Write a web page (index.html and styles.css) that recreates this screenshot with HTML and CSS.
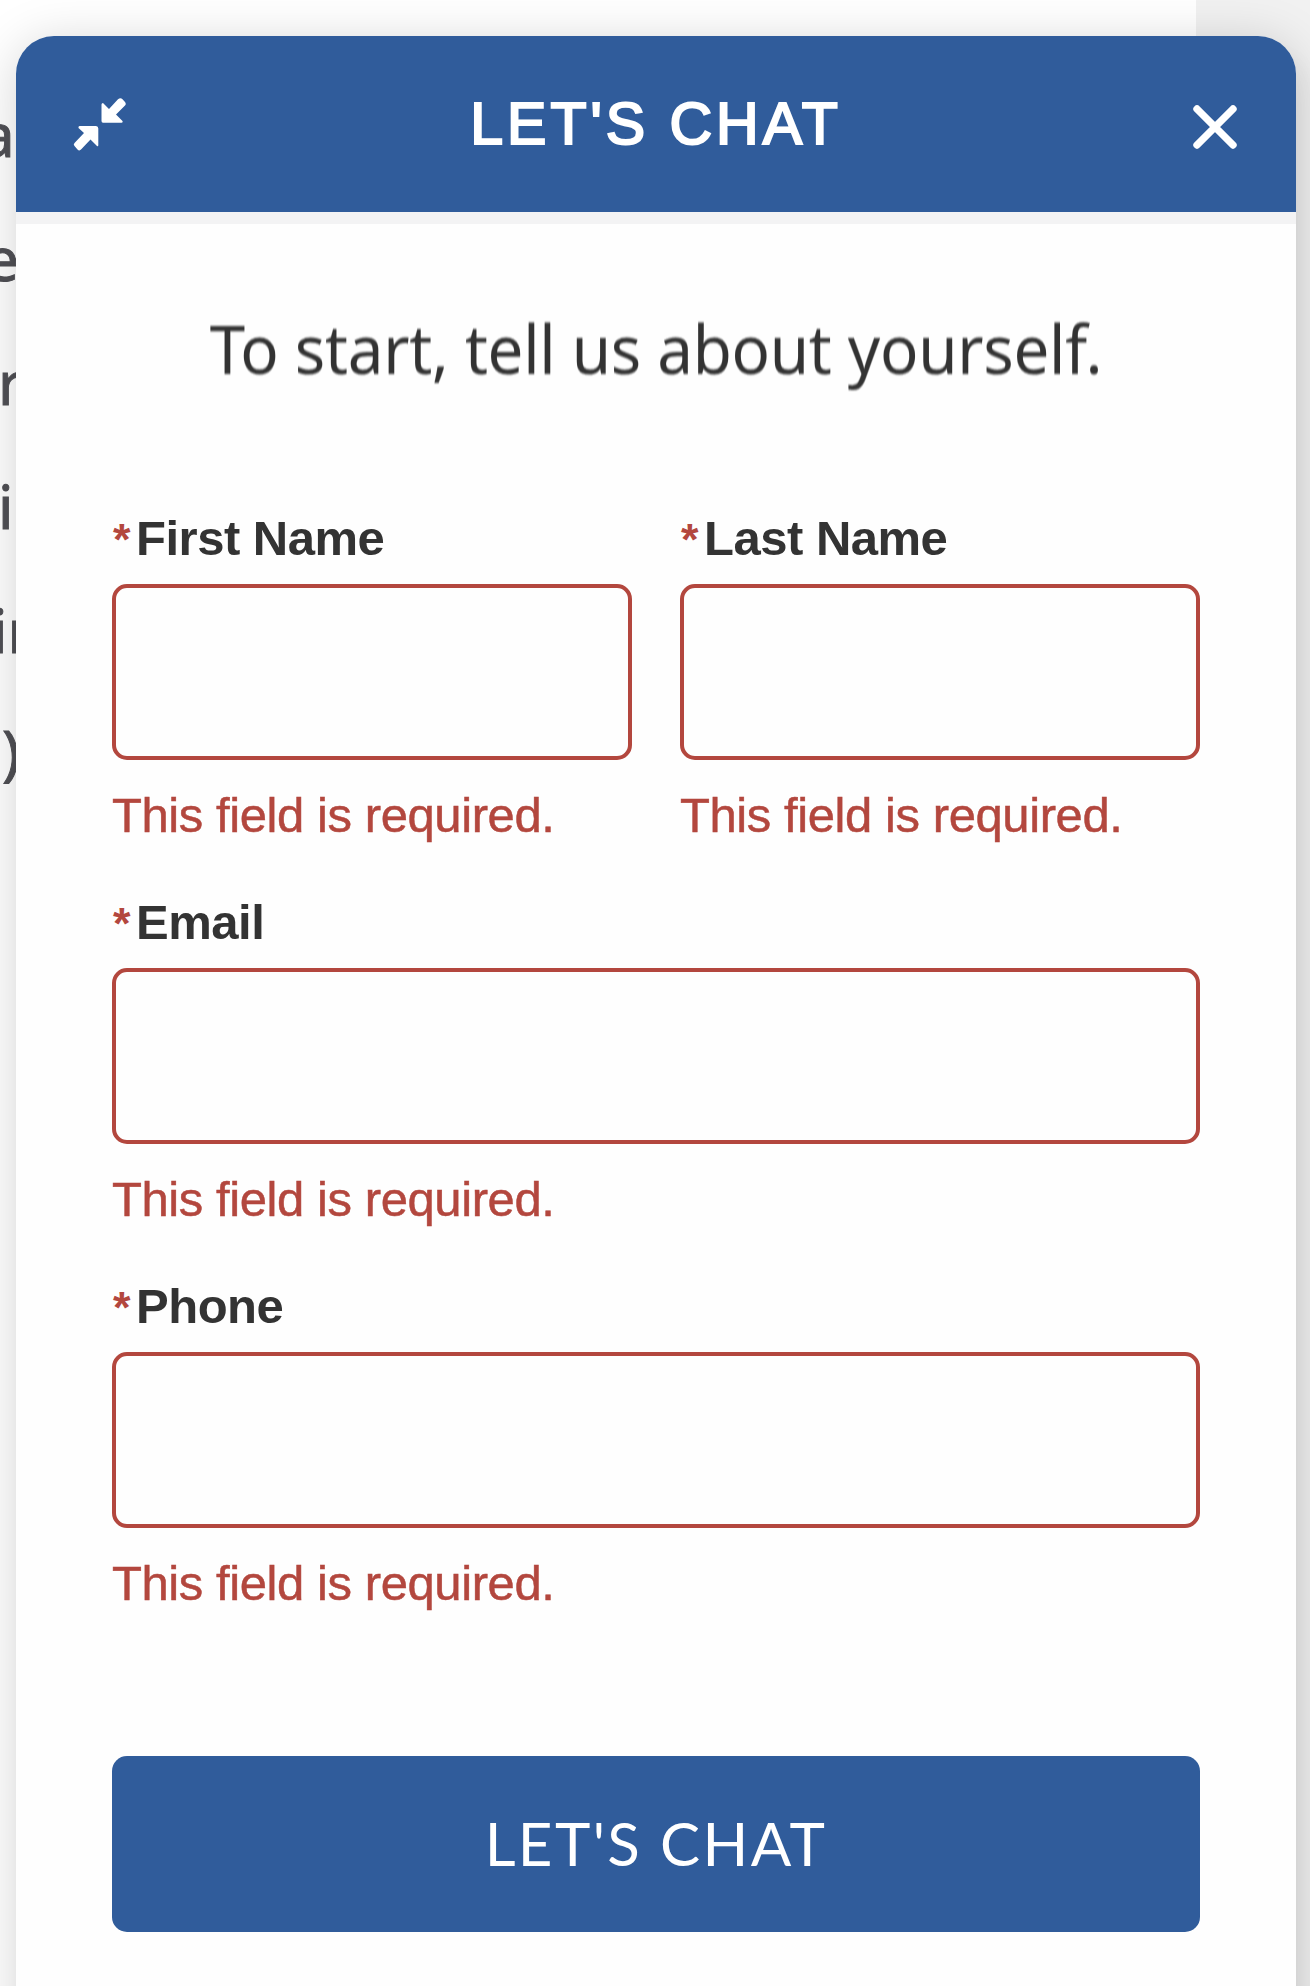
FILE: index.html
```
<!DOCTYPE html>
<html lang="en">
<head>
<meta charset="utf-8">
<title>Let's Chat</title>
<link rel="stylesheet" href="styles.css">
</head>
<body>
<div class="backdrop" aria-hidden="true">
  <div class="article"><p class="l1">a</p><p class="l2">e</p><p class="l3">r</p><p class="l4">i</p><p class="l5">in</p><p class="l6">)</p></div>
  <div class="rail"></div>
</div>
<main class="panel">
  <header class="panel-header">
    <button class="icon-button" aria-label="Minimize">
      <svg width="54" height="54" viewBox="0 0 54 54" fill="#fff"><path d="M30 5 36 11 45 1.200Q47.500-.8 49.500 1.200L52 4Q53.500 6 52 7.500L43 16.500 49.500 23Q50 24.500 48.500 24.700H30Q28.500 24.700 28.500 23V6.500Q28.500 5 30 5Z"/><path d="M24 48 17.500 41.500 8.500 51Q6.500 53.500 4.500 51.500L1.500 48Q0 46.500 1.500 45L11 35 5.500 30Q5 28.300 6.500 28H23Q25.300 28 25.300 30.500V47Q25.300 49 24 48Z"/></svg>
    </button>
    <h1 class="title">LET'S CHAT</h1>
    <button class="icon-button close" aria-label="Close">
      <svg width="46" height="46" viewBox="0 0 46 46" fill="none" stroke="#fff" stroke-width="7.400" stroke-linecap="round"><path d="M5 5 41 41M41 5 5 41"/></svg>
    </button>
  </header>
  <form class="form">
    <p class="intro">To start, tell us about yourself.</p>
    <div class="fields">
      <div class="field">
        <label class="label" for="first"><span class="star">*</span>First Name</label>
        <input class="input" id="first" type="text">
        <p class="error">This field is required.</p>
      </div>
      <div class="field">
        <label class="label" for="last"><span class="star">*</span>Last Name</label>
        <input class="input" id="last" type="text">
        <p class="error">This field is required.</p>
      </div>
      <div class="field wide">
        <label class="label" for="email"><span class="star">*</span>Email</label>
        <input class="input" id="email" type="email">
        <p class="error">This field is required.</p>
      </div>
      <div class="field wide">
        <label class="label" for="phone"><span class="star">*</span>Phone</label>
        <input class="input" id="phone" type="tel">
        <p class="error">This field is required.</p>
      </div>
    </div>
    <button class="submit" type="button">LET'S CHAT</button>
  </form>
</main>
</body>
</html>
```
FILE: styles.css
```
* { box-sizing: border-box; }
html, body { height: 1986px; overflow: hidden; }
body {
  margin: 0;
  padding: 36px 14px 0 16px;
  background: #fff;
  position: relative;
  font-family: "Liberation Sans", Arial, sans-serif;
}
p, h1 { margin: 0; }
button { border: 0; padding: 0; background: none; display: block; }

/* page content behind the chat window */
.backdrop {
  position: absolute;
  inset: 0;
  display: flex;
  justify-content: space-between;
  overflow: hidden;
}
.article {
  width: 60px;
  padding-top: 72px;
  font: 60px/124px "Noto Sans", sans-serif;
  color: #505055;
  -webkit-text-stroke: 1px #505055;
  white-space: nowrap;
}
.l1 { margin-left: -19px; }
.l2 { margin-left: -15px; }
.l3 { margin-left: -2px; }
.l4 { margin-left: -2px; }
.l5 { margin-left: -8px; }
.l6 { margin-left: 2px; margin-top: -3px; }
.rail { width: 114px; background: #f1f1f1; }

.panel {
  position: relative;
  width: 1280px;
  height: 2040px;
  border-radius: 38px 38px 0 0;
  background: #fefefe;
  box-shadow: 0 6px 50px rgba(0, 0, 0, .17), 12px 20px 24px rgba(0, 0, 0, .04);
  overflow: hidden;
}
.panel-header {
  height: 188px;
  border-bottom: 12px solid #f3f3f4;
  padding: 0 58px 0 57px;
  display: flex;
  justify-content: space-between;
  align-items: center;
  background: #305c9b;
}
.icon-button { padding-top: 4px; }
.close { padding-top: 9px; }
.title {
  padding-right: 7px;
  font-size: 59px;
  line-height: 70px;
  font-weight: 400;
  letter-spacing: 4px;
  color: #fff;
  -webkit-text-stroke: 2.2px #fff;
}
.form {
  padding: 74px 96px 0;
  display: flex;
  flex-direction: column;
}
.intro {
  font: 67px/100px "Noto Sans", sans-serif;
  letter-spacing: -.3px;
  text-align: center;
  color: #333;
  white-space: nowrap;
  transform: scaleX(.95);
  filter: blur(.8px);
}
.fields {
  margin-top: 111px;
  display: grid;
  grid-template-columns: 520px 520px;
  column-gap: 48px;
}
.field { display: flex; flex-direction: column; height: 384px; }
.wide { grid-column: span 2; }
.label {
  height: 75px;
  font-size: 49px;
  line-height: 58px;
  font-weight: 700;
  letter-spacing: -.5px;
  color: #333;
  white-space: nowrap;
}
.star {
  margin: 0 6px 0 1px;
  font-size: 45px;
  line-height: 1;
  color: #b3473e;
}
.input {
  width: 100%;
  height: 176px;
  border: 4px solid #b3473e;
  border-radius: 15px;
  background: #fefefe;
  outline: 0;
}
.error {
  margin-top: 27px;
  font-size: 49px;
  line-height: 56px;
  letter-spacing: -.42px;
  color: #b3473e;
  -webkit-text-stroke: .5px #b3473e;
  white-space: nowrap;
}
.submit {
  margin-top: 95px;
  height: 176px;
  border-radius: 15px;
  background: #305c9b;
  color: #fff;
  font: 60px/174px Lato, sans-serif;
  padding-bottom: 2px;
  letter-spacing: 2.4px;
}
```
